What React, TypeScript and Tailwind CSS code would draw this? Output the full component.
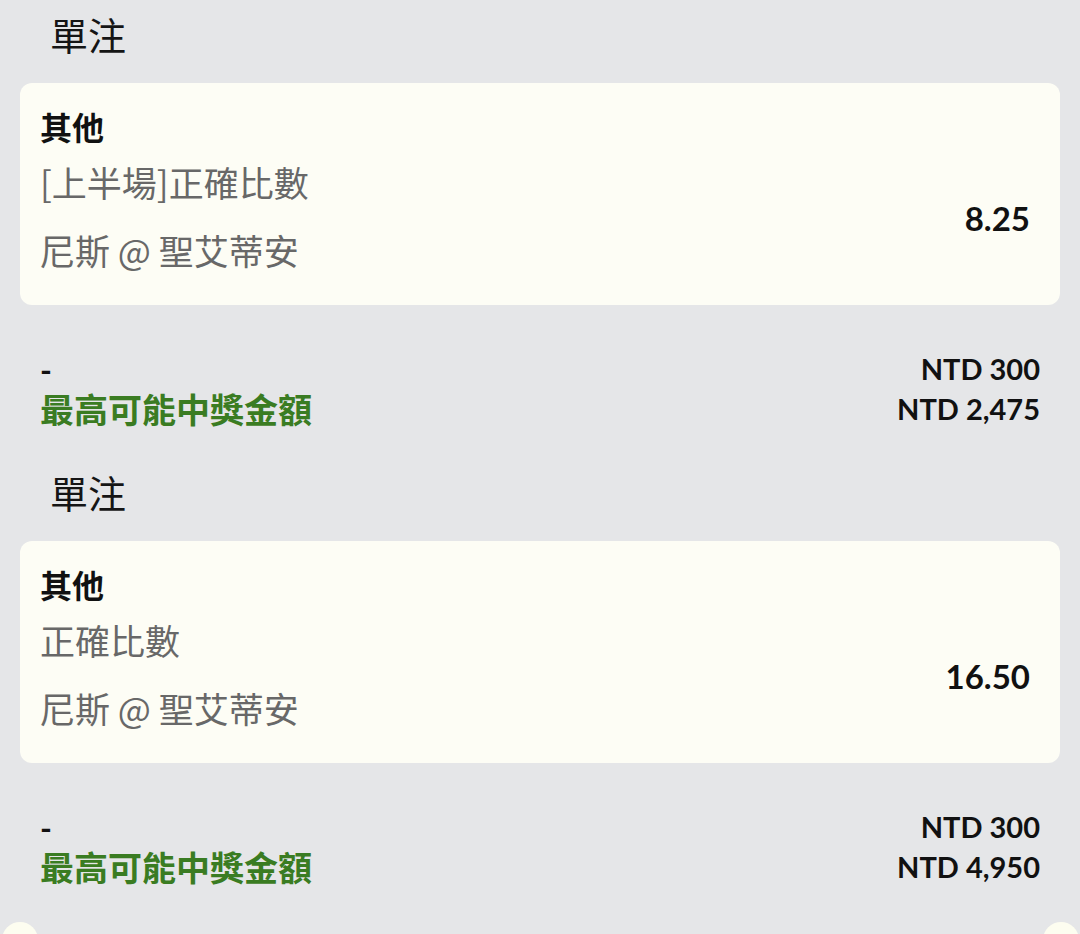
import React from "react";

const FONT = { fontFamily: 'Lato, "Noto Sans CJK TC", "Noto Sans", sans-serif' };
const GRAY_FONT = { fontFamily: '"Noto Sans CJK TC", "Noto Sans", sans-serif' };

type Bet = { market: string; match: string; odds: string; stake: string; payout: string };

const bets: Bet[] = [
  { market: "[上半場]正確比數", match: "尼斯 @ 聖艾蒂安", odds: "8.25", stake: "NTD 300", payout: "NTD 2,475" },
  { market: "正確比數", match: "尼斯 @ 聖艾蒂安", odds: "16.50", stake: "NTD 300", payout: "NTD 4,950" },
];

function Section({ bet }: { bet: Bet }) {
  return (
    <div className="flex flex-col">
      <div className="h-[70px] flex items-center pl-[30px] text-[38px] leading-none text-[#151515]">單注</div>
      <div className="mt-[13px] h-[222px] rounded-[12px] bg-[#fdfdf5] px-5 pt-[29px]">
        <div className="text-[32px] leading-[32px] font-bold text-[#111]">其他</div>
        <div className="mt-[16px] flex items-center justify-between">
          <div className="flex flex-col text-[35px] text-[#686868]" style={GRAY_FONT}>
            <div className="leading-[44px]">{bet.market}</div>
            <div className="mt-[24px] leading-[44px]">{bet.match}</div>
          </div>
          <div className="mr-[10px] pt-[5px] text-[33px] leading-none font-bold text-[#111]">{bet.odds}</div>
        </div>
      </div>
      <div className="mt-[45px] mb-[28px] px-5 flex flex-col">
        <div className="h-[40px] flex items-center justify-between">
          <span className="text-[32px] leading-none font-bold text-[#111]">-</span>
          <span className="pb-[4px] text-[29px] leading-none font-bold text-[#111]">{bet.stake}</span>
        </div>
        <div className="h-[40px] flex items-center justify-between">
          <span className="text-[34px] leading-none font-bold text-[#3a7c22]">最高可能中獎金額</span>
          <span className="pb-[4px] text-[29px] leading-none font-bold text-[#111]">{bet.payout}</span>
        </div>
      </div>
    </div>
  );
}

export default function App() {
  return (
    <div className="min-h-[934px] w-[1080px] overflow-hidden bg-[#e5e6e8]" style={FONT}>
      <div className="px-5">
        {bets.map((b, i) => (
          <Section key={i} bet={b} />
        ))}
      </div>
      <div className="mt-[6px] flex justify-between pl-[2px] pr-[1px]">
        <div className="h-[36px] w-[36px] rounded-full bg-[#fdfdf0]" />
        <div className="h-[36px] w-[36px] rounded-full bg-[#fdfdf0]" />
      </div>
    </div>
  );
}
